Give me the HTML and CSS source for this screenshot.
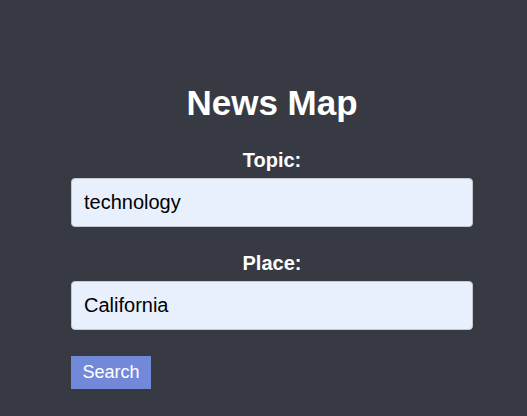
FILE: index.html
```html
<!DOCTYPE html>
<html>
<head>
<meta charset="utf-8">
<link rel="stylesheet" href="styles.css">
</head>
<body>
<main class="app">
  <h1 class="title">News Map</h1>
  <form class="form">
    <label class="label" for="topic">Topic:</label>
    <input class="field" id="topic" type="text" value="technology">
    <label class="label label-second" for="place">Place:</label>
    <input class="field" id="place" type="text" value="California">
    <button class="button" type="button">Search</button>
  </form>
</main>
</body>
</html>
```

FILE: styles.css
```css
html, body {
  margin: 0;
  padding: 0;
  background: #373a43;
  height: 100%;
}
body {
  font-family: "Liberation Sans", Arial, sans-serif;
  color: #ffffff;
}
.app {
  width: 402px;
  margin-left: 71px;
  padding-top: 83px;
  display: flex;
  flex-direction: column;
}
.title {
  margin: 0;
  font-size: 35px;
  line-height: 40px;
  text-align: center;
  font-weight: bold;
}
.form {
  display: flex;
  flex-direction: column;
  margin-top: 26px;
}
.label {
  font-size: 20px;
  font-weight: bold;
  line-height: 23px;
  text-align: center;
  margin-bottom: 6px;
}
.label-second {
  margin-top: 25px;
}
.field {
  box-sizing: border-box;
  width: 402px;
  height: 49px;
  margin: 0;
  padding: 0 12px;
  border: 1px solid #c4c6cc;
  border-radius: 4px;
  background: #e8f0fe;
  font-family: "Liberation Sans", Arial, sans-serif;
  font-size: 20px;
  color: #000000;
  outline: none;
}
.button {
  align-self: flex-start;
  margin-top: 26px;
  width: 80px;
  height: 33px;
  border: none;
  border-radius: 0;
  background: #7289da;
  color: #ffffff;
  font-family: "Liberation Sans", Arial, sans-serif;
  font-size: 18px;
  padding: 0;
}
```
